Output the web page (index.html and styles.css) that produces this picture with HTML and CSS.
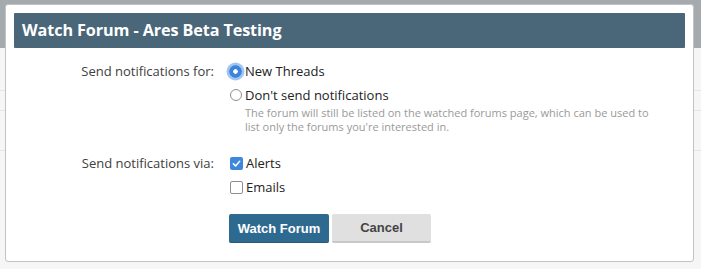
FILE: index.html
```html
<!DOCTYPE html>
<html>
<head>
<meta charset="utf-8">
<link rel="stylesheet" href="styles.css">
</head>
<body>
<div class="page">
  <div class="modal">
    <div class="modal-header">Watch Forum - Ares Beta Testing</div>
    <div class="modal-body">
      <div class="row">
        <div class="label">Send notifications for:</div>
        <div class="controls">
          <div class="option"><span class="radio checked"></span><span>New Threads</span></div>
          <div class="option second"><span class="radio"></span><span>Don't send notifications</span></div>
          <div class="hint">The forum will still be listed on the watched forums page, which can be used to<br>list only the forums you're interested in.</div>
        </div>
      </div>
      <div class="row via">
        <div class="label">Send notifications via:</div>
        <div class="controls">
          <div class="option"><span class="check checked"><svg viewBox="0 0 14 14" width="14" height="14"><path d="M3.6 7.2 L6 9.6 L10.4 4.6" fill="none" stroke="#fff" stroke-width="1.7" stroke-linecap="round" stroke-linejoin="round"/></svg></span><span>Alerts</span></div>
          <div class="option second"><span class="check"></span><span>Emails</span></div>
        </div>
      </div>
      <div class="row actions">
        <div class="label"></div>
        <div class="controls buttons">
          <button class="btn primary">Watch Forum</button>
          <button class="btn secondary">Cancel</button>
        </div>
      </div>
    </div>
  </div>
</div>
</body>
</html>
```

FILE: styles.css
```css
html, body {
  margin: 0;
  padding: 0;
}
body {
  width: 701px;
  height: 269px;
  overflow: hidden;
  background:
    linear-gradient(#a5aaaf, #a5aaaf) 0 0 / 100% 48px no-repeat,
    linear-gradient(#e4e6e8, #e4e6e8) 0 90px / 100% 1px no-repeat,
    linear-gradient(#e4e6e8, #e4e6e8) 0 110px / 100% 1px no-repeat,
    linear-gradient(#e4e6e8, #e4e6e8) 0 150px / 100% 1px no-repeat,
    #f6f6f6;
  font-family: "Open Sans", "Noto Sans", sans-serif;
}
.page {
  padding: 4px 7px 0 5px;
}
.modal {
  background: #fff;
  border: 1px solid #c3c3c3;
  border-radius: 3px;
  padding: 8px;
  box-sizing: content-box;
  width: 671px;
  height: 240px;
}
.modal-header {
  height: 35px;
  background: #4a6679;
  border-radius: 1px;
  color: #fff;
  font-weight: 700;
  font-size: 16.2px;
  line-height: 35px;
  padding-left: 8px;
  letter-spacing: -0.1px;
}
.modal-body {
  padding-top: 14px;
}
.row {
  display: flex;
  gap: 15px;
}
.label {
  width: 200px;
  flex: none;
  text-align: right;
  font-size: 13px;
  line-height: 18px;
  color: #404040;
}
.controls {
  display: flex;
  flex-direction: column;
}
.option {
  display: flex;
  align-items: center;
  gap: 3px;
  font-size: 13px;
  line-height: 18px;
  color: #222;
}
.option.second {
  margin-top: 6px;
}
.hint {
  font-size: 11px;
  line-height: 14px;
  color: #9a9a9a;
  padding-left: 16px;
  margin-top: 2px;
}
.radio {
  width: 12px;
  height: 12px;
  border: 1px solid #8f8f8f;
  border-radius: 50%;
  background: #fff;
  box-sizing: border-box;
  margin-left: 1px;
}
.radio.checked {
  width: 13px;
  height: 13px;
  border: none;
  background: radial-gradient(circle, #fff 0 2px, #3d85db 2.5px);
  box-shadow: 0 0 0 2.5px rgba(80, 150, 235, 0.55);
  margin-left: 0;
}
.via {
  margin-top: 20px;
}
.check {
  width: 13px;
  height: 13px;
  border: 1px solid #8f8f8f;
  border-radius: 2px;
  box-sizing: border-box;
  background: #fff;
  margin-left: 1px;
  display: flex;
}
.check.checked {
  border: none;
  background: #3e87dd;
}
.check svg {
  width: 13px;
  height: 13px;
}
.actions {
  margin-top: 18px;
}
.buttons {
  flex-direction: row;
  gap: 3px;
}
.btn {
  height: 29px;
  width: 100px;
  border: none;
  border-radius: 2px;
  font-family: "Liberation Sans", Arial, sans-serif;
  font-weight: 700;
  font-size: 13px;
  padding: 0;
  margin: 0;
}
.primary {
  background: #2e6a90;
  color: #fff;
  border-bottom: 1px solid #275a7a;
}
.secondary {
  width: 99px;
  background: #e0e0e0;
  color: #444;
  border-bottom: 2px solid #c8c8c8;
}
```
